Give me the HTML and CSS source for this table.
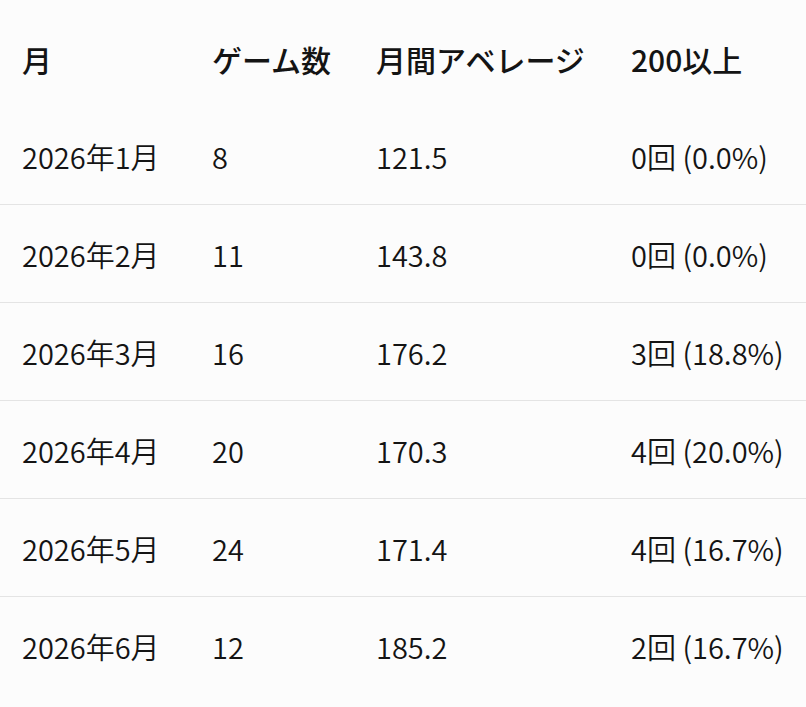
FILE: index.html
```html
<!DOCTYPE html>
<html lang="ja">
<head>
<meta charset="utf-8">
<title>月別スコア</title>
<link rel="stylesheet" href="styles.css">
</head>
<body>
<table class="stats">
  <colgroup>
    <col class="c-month">
    <col class="c-games">
    <col class="c-avg">
    <col class="c-over">
  </colgroup>
  <thead>
    <tr>
      <th>月</th>
      <th>ゲーム数</th>
      <th>月間アベレージ</th>
      <th>200以上</th>
    </tr>
  </thead>
  <tbody>
    <tr><td>2026年1月</td><td>8</td><td>121.5</td><td>0回 (0.0%)</td></tr>
    <tr><td>2026年2月</td><td>11</td><td>143.8</td><td>0回 (0.0%)</td></tr>
    <tr><td>2026年3月</td><td>16</td><td>176.2</td><td>3回 (18.8%)</td></tr>
    <tr><td>2026年4月</td><td>20</td><td>170.3</td><td>4回 (20.0%)</td></tr>
    <tr><td>2026年5月</td><td>24</td><td>171.4</td><td>4回 (16.7%)</td></tr>
    <tr><td>2026年6月</td><td>12</td><td>185.2</td><td>2回 (16.7%)</td></tr>
  </tbody>
</table>
</body>
</html>
```
FILE: styles.css
```css
html, body {
  margin: 0;
  padding: 0;
  background: #fcfcfc;
}

body {
  font-family: "Noto Sans CJK JP", "Noto Sans", sans-serif;
  color: #141414;
}

.stats {
  width: 100%;
  border-collapse: collapse;
  table-layout: fixed;
  font-size: 29px;
}

.c-month { width: 212px; }
.c-games { width: 164px; }
.c-avg { width: 255px; }
.c-over { width: 175px; }

.stats th,
.stats td {
  text-align: left;
  white-space: nowrap;
  line-height: 40px;
  padding-left: 0;
  padding-right: 0;
}

.stats th:first-child,
.stats td:first-child {
  padding-left: 22px;
}

.stats th {
  font-size: 30px;
  font-weight: 500;
  padding-top: 39px;
  padding-bottom: 28px;
}

.stats td {
  font-weight: 350;
  padding-top: 29px;
  padding-bottom: 28px;
}

.stats tbody tr {
  border-bottom: 1px solid #e4e4e4;
}

.stats tbody tr:last-child {
  border-bottom: none;
}
```
